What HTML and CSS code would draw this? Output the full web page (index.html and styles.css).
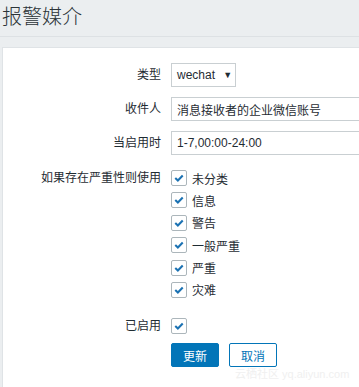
FILE: index.html
```html
<!DOCTYPE html>
<html>
<head>
<meta name="viewport" content="width=device-width, initial-scale=1">
<link rel="stylesheet" href="styles.css">
</head>
<body>

<div class="header">
  <h1>报警媒介</h1>
</div>

<div class="panel">
  <div class="form-row">
    <label class="form-label">类型</label>
    <div class="form-field">
      <div class="select">wechat <span class="arrow">&#9660;</span></div>
    </div>
  </div>

  <div class="form-row">
    <label class="form-label">收件人</label>
    <div class="form-field">
      <input type="text" class="text-input" value="消息接收者的企业微信账号">
    </div>
  </div>

  <div class="form-row">
    <label class="form-label">当启用时</label>
    <div class="form-field">
      <input type="text" class="text-input" value="1-7,00:00-24:00">
    </div>
  </div>

  <div class="form-row severity-row">
    <label class="form-label">如果存在严重性则使用</label>
    <ul class="check-list">
      <li><span class="checkbox"><svg viewBox="0 0 15 15"><path d="M3.5 7.5 L6.3 10.2 L11.5 4.8"/></svg></span>未分类</li>
      <li><span class="checkbox"><svg viewBox="0 0 15 15"><path d="M3.5 7.5 L6.3 10.2 L11.5 4.8"/></svg></span>信息</li>
      <li><span class="checkbox"><svg viewBox="0 0 15 15"><path d="M3.5 7.5 L6.3 10.2 L11.5 4.8"/></svg></span>警告</li>
      <li><span class="checkbox"><svg viewBox="0 0 15 15"><path d="M3.5 7.5 L6.3 10.2 L11.5 4.8"/></svg></span>一般严重</li>
      <li><span class="checkbox"><svg viewBox="0 0 15 15"><path d="M3.5 7.5 L6.3 10.2 L11.5 4.8"/></svg></span>严重</li>
      <li><span class="checkbox"><svg viewBox="0 0 15 15"><path d="M3.5 7.5 L6.3 10.2 L11.5 4.8"/></svg></span>灾难</li>
    </ul>
  </div>

  <div class="form-row enabled-row">
    <label class="form-label">已启用</label>
    <div class="form-field">
      <span class="checkbox"><svg viewBox="0 0 15 15"><path d="M3.5 7.5 L6.3 10.2 L11.5 4.8"/></svg></span>
    </div>
  </div>

  <div class="form-row buttons-row">
    <div class="form-label"></div>
    <div class="form-field buttons">
      <button class="btn btn-primary">更新</button>
      <button class="btn btn-alt">取消</button>
    </div>
  </div>

  <div class="watermark">云栖社区 yq.aliyun.com</div>
</div>

</body>
</html>
```

FILE: styles.css
```css
html, body {
  margin: 0;
  padding: 0;
}

body {
  background: #ebeef0;
  color: #1f2c33;
  font-family: "Liberation Sans", "Noto Sans CJK SC", sans-serif;
  font-size: 12px;
  height: 100vh;
  overflow: hidden;
}

.header {
  height: 37px;
  border-bottom: 1px solid #dde1e4;
  box-sizing: border-box;
}

.header h1 {
  margin: 0;
  padding: 5px 0 0 2px;
  font-size: 20px;
  font-weight: 300;
  line-height: 24px;
  color: #2b3438;
}

.panel {
  position: relative;
  margin: 10px 0 0 2px;
  background: #fff;
  border-left: 1px solid #dfe3e6;
  border-top: 1px solid #dfe3e6;
  height: calc(100vh - 47px);
  padding-top: 15px;
  box-sizing: border-box;
  overflow: hidden;
}

.form-row {
  display: flex;
  align-items: center;
  margin-bottom: 10px;
}

.form-label {
  width: 158px;
  padding-right: 10px;
  text-align: right;
  flex-shrink: 0;
  line-height: 24px;
}

.form-field {
  display: flex;
  align-items: center;
}

.select {
  box-sizing: border-box;
  height: 24px;
  width: 65px;
  border: 1px solid #c9cfd2;
  padding: 0 5px;
  line-height: 22px;
  white-space: nowrap;
}

.select .arrow {
  font-size: 9px;
  margin-left: 5px;
  vertical-align: 1px;
}

.text-input {
  box-sizing: border-box;
  height: 24px;
  width: 300px;
  border: 1px solid #c9cfd2;
  padding: 0 5px;
  font-family: inherit;
  font-size: 12px;
  color: #1f2c33;
  outline: none;
}

.severity-row {
  align-items: flex-start;
  margin-top: 15px;
  margin-bottom: 10px;
}

.severity-row .form-label {
  line-height: 16px;
  padding-top: 0;
}

.check-list {
  list-style: none;
  margin: 0;
  padding: 0;
}

.check-list li {
  display: flex;
  align-items: center;
  height: 16px;
  margin-bottom: 6.4px;
}

.checkbox {
  display: inline-block;
  box-sizing: border-box;
  width: 16px;
  height: 16px;
  border: 1px solid #acb6bb;
  border-radius: 2px;
  margin-right: 5px;
  background: #fff;
}

.checkbox svg {
  display: block;
  width: 14px;
  height: 14px;
}

.checkbox path {
  fill: none;
  stroke: #1b72b3;
  stroke-width: 2.2;
}

.enabled-row {
  margin-top: 14px;
  margin-bottom: 9px;
}

.enabled-row .form-label {
  line-height: 16px;
}

.buttons {
  gap: 10px;
}

.btn {
  box-sizing: border-box;
  width: 48px;
  height: 24px;
  border-radius: 2px;
  font-family: inherit;
  font-size: 12px;
  padding: 0;
  cursor: pointer;
}

.btn-primary {
  background: #0275b8;
  border: 1px solid #0275b8;
  color: #fff;
}

.btn-alt {
  background: #fff;
  border: 1px solid #0275b8;
  color: #0275b8;
}

.watermark {
  position: absolute;
  left: 232px;
  top: 317px;
  font-size: 11px;
  color: #f0f0f0;
  white-space: nowrap;
}
```
